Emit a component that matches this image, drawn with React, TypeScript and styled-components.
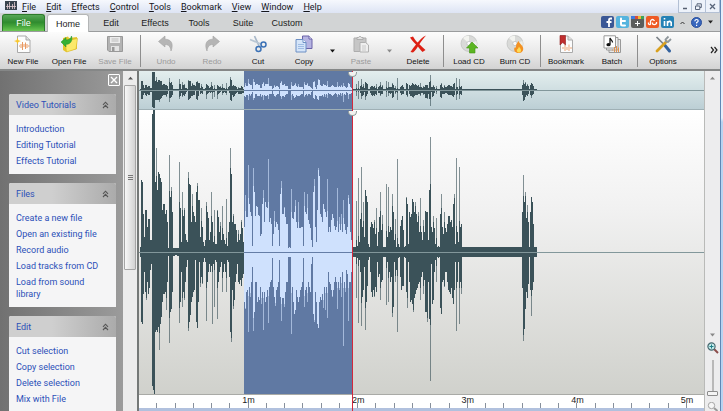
import React from "react";
import styled, { createGlobalStyle, css } from "styled-components";

const Global = createGlobalStyle`
  html, body, #root { height: 100%; margin: 0; }
  body { background: #e9f1fa; overflow: hidden; }
  *, *::before, *::after { box-sizing: border-box; }
  button { border: 0; padding: 0; background: none; color: inherit; font: inherit; }
`;

const uiFont = `Roboto, "Open Sans", sans-serif`;
const compactFont = `"Liberation Sans", Arial, sans-serif`;

const Desktop = styled.div`
  display: flex;
  height: 100%;
  padding-right: 2px;
  background: linear-gradient(#e6eefa 0 118px, #b7d3f1 122px 100%);
`;

const Window = styled.div`
  display: flex;
  flex-direction: column;
  flex: 1;
  min-width: 0;
  border-right: 1px solid #5f87b5;
  background: #f0f0f0;
  color: #1c1c1c;
  font: 9px/12px ${uiFont};
`;

const MenuBar = styled.nav`
  display: flex;
  align-items: center;
  flex: none;
  height: 13px;
  padding-left: 5px;
  background: linear-gradient(#f6f8fd, #dde4f4);
`;

const MenuItem = styled.button`
  margin-left: 10px;
  font: 9px/12px ${uiFont};
  color: #16161c;
  &:first-of-type { margin-left: 5px; }
  &::first-letter { text-decoration: underline; }
`;

const WindowButtons = styled.div`
  display: flex;
  align-self: stretch;
  margin-left: auto;
`;

const WindowButton = styled.button`
  display: grid;
  place-items: center;
  width: 14px;
  border: 1px solid #b3c0d4;
  border-top: 0;
  background: #edf2fa;
  & + & { border-left: 0; }
`;

const TabBar = styled.div`
  display: flex;
  align-items: flex-end;
  flex: none;
  height: 19px;
  padding-left: 2px;
  border-bottom: 1px solid #9a9c9d;
  background: #d2d4d5;
`;

const Tab = styled.button<{ $kind?: "file" | "active" }>`
  width: 44px;
  height: 17px;
  border-radius: 3px 3px 0 0;
  font: 9px/16px ${compactFont};
  ${(p) =>
    p.$kind === "file" &&
    css`
      width: 43px;
      margin-right: 2px;
      border: 1px solid #2c7a2c;
      border-bottom: 0;
      color: #fff;
      background: linear-gradient(#58a758, #2f8b2f 45%, #44a53a 70%, #6cc653);
    `}
  ${(p) =>
    p.$kind === "active" &&
    css`
      width: 42px;
      height: 18px;
      margin-bottom: -1px;
      border: 1px solid #b4b6b7;
      border-bottom: 0;
      background: #fff;
    `}
`;

const SocialLinks = styled.div`
  display: flex;
  align-items: center;
  align-self: stretch;
  gap: 2px;
  margin-left: auto;
  padding-right: 4px;
`;

const SocialLink = styled.a<{ $color: string }>`
  display: grid;
  place-items: center;
  width: 13px;
  height: 12px;
  border-radius: 2px;
  background: ${(p) => p.$color};
  svg { display: block; }
`;

const RibbonButton = styled.button`
  display: grid;
  place-items: center;
  width: 12px;
  height: 12px;
`;

const Toolbar = styled.div`
  display: flex;
  flex: none;
  height: 37px;
  background: linear-gradient(#fcfcfc, #e9e9e9 55%, #d3d3d3);
`;

const Tool = styled.button`
  display: flex;
  flex-direction: column;
  align-items: center;
  flex: none;
  width: 46px;
  padding-top: 3px;
  font: 8px/11px ${compactFont};
  color: #111;
  white-space: nowrap;
  svg { display: block; margin-bottom: 2px; }
  &:disabled { color: #9b9b9b; }
`;

const ToolArrow = styled.button`
  display: grid;
  place-items: center;
  width: 11px;
`;

const ToolDivider = styled.div`
  flex: none;
  width: 1px;
  margin: 3px 2px 2px;
  background: #8e8e8e;
`;

const Overflow = styled.button`
  margin-left: auto;
  padding-right: 2px;
`;

const Body = styled.div`
  display: flex;
  flex: 1;
  min-height: 0;
  border-top: 2px solid #858787;
`;

const Sidebar = styled.aside`
  display: flex;
  flex: none;
  width: 139px;
  border-right: 2px solid #747877;
  background: #8f8f8f;
`;

const PanelList = styled.div`
  display: flex;
  flex-direction: column;
  gap: 9px;
  flex: 1;
  min-width: 0;
  overflow: hidden;
  padding: 3px 7px 0 9px;
  background: linear-gradient(90deg, #717171, #9b9b9b);
`;

const CloseButton = styled.button`
  display: grid;
  place-items: center;
  flex: none;
  align-self: flex-end;
  width: 12px;
  height: 12px;
  margin: 0 -4px -1px 0;
  border: 1px solid #fff;
  border-radius: 1px;
  background: #a3a3a3;
`;

const Panel = styled.section`
  flex: none;
  border-radius: 2px 2px 0 0;
  background: #f5f5f6;
`;

const PanelTitle = styled.h2`
  display: flex;
  align-items: center;
  justify-content: space-between;
  height: 21px;
  margin: 0;
  padding: 0 7px;
  border-radius: 2px 2px 0 0;
  background: linear-gradient(90deg, #cfcfcf 40%, #ababab);
  font: 9px/12px ${uiFont};
  color: #2c50b8;
`;

const PanelLinks = styled.ul`
  display: flex;
  flex-direction: column;
  gap: 4px;
  margin: 0;
  padding: 8px 7px 7px;
  list-style: none;
`;

const PanelLink = styled.a`
  display: block;
  font: 9px/12px ${uiFont};
  color: #2c50b8;
  text-decoration: none;
`;

const SideScroll = styled.div`
  display: flex;
  flex-direction: column;
  align-items: center;
  flex: none;
  width: 14px;
  background: #ececec;
`;

const ScrollArrow = styled.button`
  display: grid;
  place-items: center;
  width: 12px;
  height: 14px;
`;

const ScrollThumb = styled.div`
  display: grid;
  place-items: center;
  width: 12px;
  height: 185px;
  border: 1px solid #a5a5a5;
  border-radius: 1px;
  background: linear-gradient(90deg, #f8f8f8, #d2d2d2);
`;

const WaveColumn = styled.main`
  position: relative;
  display: flex;
  flex-direction: column;
  flex: 1;
  min-width: 0;
`;

const OverviewPane = styled.div`
  flex: none;
  height: 39px;
  border-bottom: 1px solid #9fb0b5;
  background: linear-gradient(#e3eeee, #bccfd5);
  svg { display: block; width: 100%; height: 100%; }
`;

const MainPane = styled.div`
  flex: 1;
  min-height: 0;
  border-bottom: 1px solid #a9aaa6;
  background: linear-gradient(#fff, #f1f1f1 35%, #d0d1cc);
  svg { display: block; width: 100%; height: 100%; }
`;

const Ruler = styled.div`
  flex: none;
  height: 16px;
  overflow: hidden;
  border-bottom: 3px solid #b1c1de;
  background: #fff;
`;

const RulerLabels = styled.div`
  display: flex;
  height: 8px;
  &::before {
    content: "";
    flex: 0 0 9.7%;
  }
  span {
    flex: 0 0 19.4%;
    text-align: center;
    font: 9px/10px ${compactFont};
    color: #222;
  }
`;

const RulerTicks = styled.div`
  display: flex;
  height: 5px;
  i {
    flex: 0 0 3.2333%;
    border-right: 1px solid #87909c;
  }
`;

const Playhead = styled.div`
  position: absolute;
  top: 0;
  bottom: 0;
  left: 37.7%;
  width: 1px;
  background: #d3283c;
`;

const PlayheadGrip = styled.div<{ $top: number }>`
  position: absolute;
  top: ${(p) => p.$top}px;
  left: -4px;
  width: 9px;
  height: 5px;
  border: 1px solid #8e9a9a;
  border-top: 0;
  border-radius: 0 0 5px 5px;
  background: #f2f2f0;
`;

const ZoomRail = styled.div`
  display: flex;
  flex-direction: column;
  align-items: center;
  flex: none;
  width: 16px;
  border-left: 1px solid #b9bab8;
  background: #ededee;
`;

const RailSpacer = styled.div`
  flex: 1;
`;

const ZoomSlider = styled.input`
  appearance: none;
  writing-mode: vertical-lr;
  direction: rtl;
  width: 12px;
  height: 36px;
  margin: 6px 0 6px;
  background: linear-gradient(#b9b9b9, #b9b9b9) center / 2px 100% no-repeat;
  &::-webkit-slider-thumb {
    appearance: none;
    width: 11px;
    height: 5px;
    border: 1px solid #8c8c8c;
    border-radius: 1px;
    background: #f4f4f4;
  }
`;

/* Peak height above and below the centre line, one pair per column, by first column of each run. */
const FLOOR = 5;
type Pair = [number, number];
const runs: { start: number; peaks: Pair[] }[] = [
  {
    start: 1,
    peaks: [
      [5, 5], [72, 70], [70, 72], [38, 42], [15, 20], [42, 40], [42, 48], [25, 30], [33, 42], [33, 36],
      [12, 18], [12, 12], [138, 134], [143, 138], [143, 142], [70, 80], [104, 78], [62, 80], [80, 75], [78, 98],
      [74, 72], [70, 65], [42, 50], [48, 42], [48, 42], [38, 40], [42, 58], [30, 30], [4, 4], [97, 91],
      [55, 60], [65, 57], [40, 40], [4, 4], [4, 4], [4, 3], [4, 3], [4, 4], [4, 4], [90, 71],
      [44, 50], [10, 20], [60, 55], [36, 40], [44, 48], [18, 30], [12, 15], [10, 8], [80, 79], [68, 70],
      [67, 63], [30, 50], [58, 45], [40, 40], [36, 38], [30, 8], [60, 70], [69, 76], [52, 50], [52, 10],
      [15, 35], [44, 25], [25, 32], [10, 10], [6, 6], [12, 10], [50, 69], [40, 30], [34, 20], [12, 12],
      [20, 20], [60, 14], [30, 72], [10, 12], [42, 55], [8, 8], [8, 10], [42, 67], [35, 30], [20, 20],
      [30, 15], [12, 10], [46, 40], [18, 20], [12, 12], [8, 20], [53, 40], [6, 8], [20, 10], [30, 25],
      [104, 80], [78, 90], [30, 38], [38, 57], [28, 48], [28, 30], [22, 22], [10, 12], [22, 30], [12, 32],
      [18, 28], [32, 34], [24, 26], [10, 22],
    ],
  },
  {
    start: 105,
    peaks: [
      [25, 50], [57, 57], [35, 40], [35, 38], [87, 80], [48, 35], [40, 45], [36, 30], [6, 15], [84, 79],
      [60, 60], [36, 30], [46, 30], [45, 50], [37, 45], [36, 48], [16, 35], [18, 52], [48, 40], [62, 78],
      [30, 40], [50, 50], [45, 45], [44, 38], [93, 71], [30, 35], [34, 30], [28, 28], [6, 6], [18, 35],
      [41, 45], [25, 54], [30, 38], [28, 35], [22, 30], [6, 8], [58, 45], [71, 69], [38, 46], [38, 46],
      [45, 55], [35, 40], [28, 30], [28, 30], [4, 5], [5, 5], [4, 5], [63, 82], [34, 35], [33, 50],
      [40, 62], [52, 58], [30, 38], [24, 45], [50, 50], [24, 45], [24, 38], [25, 35], [25, 30], [6, 6],
      [60, 55], [40, 38], [38, 35], [58, 50], [32, 30], [28, 35], [24, 40], [12, 12], [5, 5], [60, 62],
      [73, 70], [25, 40], [10, 50], [42, 72], [84, 76], [76, 50], [38, 45], [35, 48], [30, 42], [48, 56],
      [43, 35], [40, 58], [35, 35], [73, 66], [20, 20], [25, 30], [20, 32], [32, 38], [38, 45], [34, 38],
      [26, 30], [22, 25], [25, 30], [64, 57], [20, 30], [35, 38], [22, 25], [38, 45], [20, 20], [52, 94],
      [28, 30], [22, 40], [18, 18], [25, 22], [57, 69], [48, 30], [20, 30], [12, 20], [12, 15],
    ],
  },
  {
    start: 214,
    peaks: [
      [5, 5], [5, 5], [5, 5], [51, 46], [6, 6], [74, 71], [10, 8], [33, 20], [85, 74], [25, 45],
      [50, 38], [15, 15], [62, 78], [56, 50], [50, 34], [8, 8], [5, 5], [25, 20], [30, 40], [28, 45],
      [24, 38], [32, 45], [18, 35], [44, 40], [6, 10], [20, 25], [35, 22], [60, 48], [22, 30], [37, 28],
      [5, 5], [5, 5], [5, 5], [68, 53], [15, 10], [65, 50], [20, 20], [25, 30], [22, 25], [58, 65],
      [40, 55], [12, 10], [33, 30], [5, 18], [93, 80], [8, 6], [5, 5], [26, 25], [32, 38], [36, 34],
      [22, 34], [5, 5], [6, 6], [55, 40], [48, 56], [8, 10], [40, 30], [35, 50], [38, 48], [53, 52],
      [50, 60], [40, 46], [50, 42], [38, 38], [30, 36], [40, 32], [20, 30], [54, 48], [20, 25], [12, 20],
      [32, 42], [20, 28], [41, 60], [40, 60], [40, 70], [12, 30], [62, 67], [115, 129], [25, 12], [20, 52],
      [36, 48], [24, 20], [8, 8], [34, 30], [5, 5], [6, 6], [5, 5], [38, 56], [58, 62], [25, 30],
      [18, 28], [40, 35], [24, 20], [20, 20], [28, 30], [36, 38], [36, 40], [30, 42], [32, 36], [25, 46],
      [48, 52], [58, 38], [8, 10], [94, 79], [20, 30], [10, 10], [85, 72], [25, 30], [28, 42],
    ],
  },
  {
    start: 383,
    peaks: [
      [40, 36], [77, 89], [50, 77], [60, 57], [34, 40], [47, 46], [30, 32], [5, 5], [40, 38], [55, 64],
      [50, 38], [28, 30], [5, 5], [5, 5], [5, 5],
    ],
  },
];

const END = 398;
const peaks: Pair[] = Array.from({ length: END }, () => [FLOOR, FLOOR] as Pair);
runs.forEach((run) => run.peaks.forEach((p, i) => (peaks[run.start + i] = p)));

const SEL_START = 105;
const SEL_END = 213;
const VIEW_WIDTH = 565;

const columns = (from: number, to: number, mid: number, scale: number, core: boolean) => {
  let d = "";
  for (let x = Math.max(from, 1); x < to; x++) {
    const reach = (side: 0 | 1) => {
      const own = peaks[x][side];
      const before = peaks[x - 1]?.[side] ?? FLOOR;
      const after = peaks[x + 1]?.[side] ?? FLOOR;
      const size = core ? Math.min(own, Math.max(before, after) + 6) : own;
      return Math.max(1, Math.round(size * scale));
    };
    d += `M${x + 0.5} ${mid - reach(0)}V${mid + reach(1)}`;
  }
  return d;
};

function Waveform({ height, mid, scale }: { height: number; mid: number; scale: number }) {
  const parts = [
    { from: 0, to: SEL_START, color: "#3b5259" },
    { from: SEL_START, to: SEL_END, color: "#cfe1fd" },
    { from: SEL_END, to: END, color: "#3b5259" },
  ];
  return (
    <svg viewBox={`0 0 ${VIEW_WIDTH} ${height}`} preserveAspectRatio="none" role="img" aria-label="Waveform">
      <rect x={SEL_START} width={SEL_END - SEL_START + 1} height={height} fill="#6079a3" />
      {parts.map((p) => (
        <g key={p.from} stroke={p.color}>
          <path d={columns(p.from, p.to, mid, scale, false)} opacity={0.62} />
          <path d={columns(p.from, p.to, mid, scale, true)} />
        </g>
      ))}
      <path d={`M0 ${mid + 0.5}H${VIEW_WIDTH}`} stroke="#82979b" />
      <path d={`M${SEL_START} ${mid + 0.5}H${SEL_END}`} stroke="#647da6" />
    </svg>
  );
}

const Caret = ({ up, color = "#222" }: { up?: boolean; color?: string }) => (
  <svg width="7" height="4" viewBox="0 0 7 4">
    <path d={up ? "M1 3.5L3.5 .8L6 3.5Z" : "M1 .5H6L3.5 3.4Z"} fill={color} />
  </svg>
);

const Chevrons = () => (
  <svg width="7" height="8" viewBox="0 0 7 8" fill="none" stroke="#555" strokeWidth="1.1">
    <path d="M1 3.8L3.5 1.2L6 3.8M1 7L3.5 4.4L6 7" />
  </svg>
);

const Disc = () => (
  <>
    <circle cx="9" cy="8.5" r="8" fill="#d9dad8" stroke="#bdbfbd" strokeWidth=".7" />
    <path d="M9 8.5L3 3A8 8 0 0 1 9 .8Z" fill="#f3f4f0" />
    <path d="M9 8.5L16.5 6A8 8 0 0 1 16 12Z" fill="#eef0ea" />
    <circle cx="9" cy="8.5" r="2.2" fill="#fafafa" stroke="#b8baba" strokeWidth=".7" />
  </>
);

const icons: Record<string, React.ReactNode> = {
  new: (
    <>
      <path d="M3.5 1H12L16 5V17.5H3.5Z" fill="#fdfdfd" stroke="#a9a9a9" />
      <path d="M12 1V5H16" fill="#e2e2e2" stroke="#a9a9a9" />
      <path d="M5 11H6M7 9V13M8.5 7V15M10 9V12M11.500 7.500V14M13 9V13M14 11H15.500" stroke="#e99a63" />
      <path d="M3.500 2.500L4.400 5.200L7 6L4.400 6.900L3.500 9.500L2.600 6.900L0 6L2.600 5.200Z" fill="#f8c62a" />
    </>
  ),
  open: (
    <>
      <path d="M3 3L8 1.500L9 3L17 2V14L6 17L3 15Z" fill="#e5c62b" />
      <path d="M5 6L17.500 3.500L16 14L6.500 17Z" fill="#fbe96a" stroke="#d8b526" strokeWidth=".6" />
      <path d="M1 7L6 2.500V5C9 5 11 3.500 11.500 1C13 6 10 9.500 6 9.300V12Z" fill="#35b135" stroke="#1d8f2a" strokeWidth=".5" />
    </>
  ),
  save: (
    <>
      <path d="M1.500 1.500H16.500V16.500H3L1.500 15Z" fill="#b3b3b3" stroke="#999" />
      <path d="M4 2H14V8H4Z" fill="#ececec" />
      <path d="M5.500 4H12.500M5.500 6H12.500" stroke="#bbb" />
      <path d="M5 11H13V16H5Z" fill="#e4e4e4" />
      <path d="M6 12H8.500V16H6Z" fill="#999" />
    </>
  ),
  undo: <path d="M1.500 6.500L8 1V4.200C14 4.200 17 8.500 14 16C13.500 11.500 11.500 9.500 8 9.500V12Z" fill="#b5b5b5" stroke="#a2a2a2" strokeWidth=".6" />,
  redo: <path d="M16.500 6.500L10 1V4.200C4 4.200 1 8.500 4 16C4.500 11.500 6.500 9.500 10 9.500V12Z" fill="#b5b5b5" stroke="#a2a2a2" strokeWidth=".6" />,
  cut: (
    <>
      <path d="M5.500 1L10.500 12" stroke="#a7b7c8" strokeWidth="1.700" />
      <path d="M1 4.500L13 9.500" stroke="#b9c7d4" strokeWidth="1.700" />
      <circle cx="9.500" cy="14" r="2.500" fill="none" stroke="#3c72b6" strokeWidth="1.500" />
      <circle cx="14.500" cy="9.500" r="2.500" fill="none" stroke="#3c72b6" strokeWidth="1.500" />
    </>
  ),
  copy: (
    <>
      <path d="M7.500 1H14L17 4V13.500H7.500Z" fill="#b6b4e2" stroke="#6a62a8" />
      <path d="M14 1V4H17" fill="#efeefa" stroke="#6a62a8" />
      <path d="M1 4.500H8L11 7.500V17H1Z" fill="#d5e5f9" stroke="#6d8fc4" />
      <path d="M3 9.500H9M3 11.500H9M3 13.500H9" stroke="#9fbce4" />
      <path d="M8 4.500V7.500H11" fill="#fff" stroke="#6d8fc4" />
    </>
  ),
  paste: (
    <>
      <path d="M2 3H14V16.500H2Z" fill="#c6c6c6" stroke="#adadad" />
      <path d="M5 4.500V2.500H6.500A1.600 1.600 0 0 1 9.500 2.500H11V4.500Z" fill="#e2e2e2" stroke="#a5a5a5" strokeWidth=".8" />
      <path d="M8 7.500H13.500L16.500 10V17H8Z" fill="#efefef" stroke="#b0b0b0" />
      <path d="M10 11H14M10 13H14M10 15H14" stroke="#cacaca" />
    </>
  ),
  remove: <path d="M1 2.500L4 1.500C6 5 7.500 6.500 8.700 7.600C11 4.500 13.500 2 17 .5C14 4 12 6.500 10.400 9.300C12.500 11.500 14.500 13.500 16.500 15L13.500 17C11.500 15 10 13.200 8.900 11.600C7.500 14 6 16 4 17.500L1.500 17C3 14.500 5 12 7 9.500C4.500 7 2.500 5 1 2.500Z" fill="#dd2014" />,
  load: (
    <>
      <Disc />
      <path d="M12 7L18 13H15V18H9.500V13H6.500Z" fill="#5cb622" stroke="#3f9414" strokeWidth=".6" />
    </>
  ),
  burn: (
    <>
      <Disc />
      <path d="M12.500 6C13.500 9 16 9.500 17 12.500C18 16 15.500 18 12.500 18C9 18 7.500 15.500 8.500 12.500C9.500 13 10 12.500 10 11.500C10 9.500 11 8 12.500 6Z" fill="#f39223" />
      <path d="M13 11.500C13.500 13 15 13.500 15 15.500C15 17 14 17.500 12.700 17.500C11 17.500 10.500 16 11 14.500C12 14 12.500 13 13 11.500Z" fill="#fddc56" />
    </>
  ),
  bookmark: (
    <>
      <path d="M3.500 1H11L15.500 5V17.500H3.500Z" fill="#fcfcfc" stroke="#aaa" />
      <path d="M11 1V5H15.500" fill="#e1e1e1" stroke="#aaa" />
      <path d="M6 12V14M8 10V16M10 12V15M12 9.500V16M14 12V14" stroke="#eda778" />
      <path d="M3 .5H8.500V10L5.750 7.500L3 10Z" fill="#c02e2e" stroke="#8f1c1c" strokeWidth=".6" />
    </>
  ),
  batch: (
    <>
      <path d="M6 4.500H17.500V17.500H6Z" fill="#e9e9e9" stroke="#999" />
      <path d="M3.500 2.500H15V15H3.500Z" fill="#f1f1f1" stroke="#999" />
      <path d="M1 .8H12.500V13H1Z" fill="#fff" stroke="#999" />
      <path d="M9 15H10M11.500 12V17M13.500 11V17M15.500 12.500V17" stroke="#e4924e" />
      <path d="M7 9.500V3C7.500 5 9.500 5 9.500 7.500" fill="none" stroke="#111" strokeWidth="1.300" />
      <ellipse cx="5.500" cy="9.700" rx="2.100" ry="1.600" fill="#111" />
    </>
  ),
  options: (
    <>
      <path d="M2.500 2L11.500 11" stroke="#7a8188" strokeWidth="1.700" />
      <path d="M11 10.500L15.500 16" stroke="#33629e" strokeWidth="3" strokeLinecap="round" />
      <path d="M12.500 6.500L3 16" stroke="#d9a11f" strokeWidth="2.800" strokeLinecap="round" />
      <path d="M14.500 1.500L11.500 4.500L12 6.500L14 7L17 4" fill="none" stroke="#8f979c" strokeWidth="1.800" />
    </>
  ),
};

const Icon = ({ name }: { name: string }) => (
  <svg width="18" height="19" viewBox="0 0 18 19" fill="none" aria-hidden="true">
    {icons[name]}
  </svg>
);

type ToolItem = { icon: string; label: string; disabled?: boolean; menu?: boolean };
const toolGroups: ToolItem[][] = [
  [
    { icon: "new", label: "New File" },
    { icon: "open", label: "Open File" },
    { icon: "save", label: "Save File", disabled: true },
  ],
  [
    { icon: "undo", label: "Undo", disabled: true },
    { icon: "redo", label: "Redo", disabled: true },
    { icon: "cut", label: "Cut" },
    { icon: "copy", label: "Copy", menu: true },
    { icon: "paste", label: "Paste", disabled: true, menu: true },
    { icon: "remove", label: "Delete" },
  ],
  [
    { icon: "load", label: "Load CD" },
    { icon: "burn", label: "Burn CD" },
  ],
  [
    { icon: "bookmark", label: "Bookmark" },
    { icon: "batch", label: "Batch" },
  ],
  [{ icon: "options", label: "Options" }],
];

const panels = [
  { title: "Video Tutorials", links: ["Introduction", "Editing Tutorial", "Effects Tutorial"] },
  {
    title: "Files",
    links: ["Create a new file", "Open an existing file", "Record audio", "Load tracks from CD", "Load from sound library"],
  },
  { title: "Edit", links: ["Cut selection", "Copy selection", "Delete selection", "Mix with File"] },
];

const menus = ["File", "Edit", "Effects", "Control", "Tools", "Bookmark", "View", "Window", "Help"];
const tabs = ["Edit", "Effects", "Tools", "Suite", "Custom"];

const social = [
  { name: "Facebook", color: "#3a5795", art: <path d="M11 2.500H9.500Q8 2.500 8 4.200V11M5.500 6H10.500" stroke="#fff" strokeWidth="1.800" /> },
  { name: "Twitter", color: "#55b4de", art: <path d="M5 2.500V8Q5 9.500 6.500 9.500H9M5 5H9" stroke="#fff" strokeWidth="2" strokeLinecap="round" /> },
  {
    name: "Google Plus",
    color: "#5b5d5c",
    art: (
      <>
        <path d="M0 1.500H4" stroke="#3d7be0" strokeWidth="3" />
        <path d="M4 1.500H7" stroke="#dc4b3a" strokeWidth="3" />
        <path d="M7 1.500H10" stroke="#efba32" strokeWidth="3" />
        <path d="M10 1.500H13" stroke="#3da457" strokeWidth="3" />
        <path d="M4 7.500H9M6.500 5V10" stroke="#fff" />
      </>
    ),
  },
  { name: "StumbleUpon", color: "#ee5a24", art: <path d="M2.500 6.500V8Q4.500 9.500 4.500 7.500V5Q6.500 2 8.500 5M6.500 6.500V8Q8.500 9.500 10.500 7.500V6" stroke="#fff" strokeWidth="1.300" /> },
  { name: "LinkedIn", color: "#2481b5", art: <path d="M3.500 5V10M3.500 2V3.600M6.500 10V5M6.500 7Q8.500 4 10.200 6.500V10" stroke="#fff" strokeWidth="1.600" /> },
];

export default function App() {
  return (
    <Desktop>
      <Global />
      <Window>
        <MenuBar aria-label="Main menu">
          <svg width="12" height="12" viewBox="0 0 12 12" aria-hidden="true">
            <path d="M0 0H12V9H0Z" fill="#39444f" />
            <path d="M1 5.500H11M2.500 3V8M4.500 1V8M7.500 3V8M9.500 1V8" stroke="#e5cdd3" strokeWidth=".8" />
          </svg>
          {menus.map((m) => (
            <MenuItem key={m}>{m}</MenuItem>
          ))}
          <WindowButtons>
            <WindowButton aria-label="Minimize">
              <svg width="7" height="7"><path d="M1 5.500H5" stroke="#555f70" strokeWidth="1.500" /></svg>
            </WindowButton>
            <WindowButton aria-label="Restore">
              <svg width="7" height="7" fill="none" stroke="#59657a"><path d="M2 2.500V.8H6.300V4.500H5M.5 3H4.800V6.500H.5Z" /></svg>
            </WindowButton>
            <WindowButton aria-label="Close">
              <svg width="7" height="7" stroke="#59657a" strokeWidth="1.300"><path d="M1 1L6 6M6 1L1 6" /></svg>
            </WindowButton>
          </WindowButtons>
        </MenuBar>

        <TabBar>
          <Tab $kind="file">File</Tab>
          <Tab $kind="active">Home</Tab>
          {tabs.map((t) => (
            <Tab key={t}>{t}</Tab>
          ))}
          <SocialLinks>
            {social.map((s) => (
              <SocialLink key={s.name} href="#" aria-label={s.name} $color={s.color}>
                <svg width="13" height="12" viewBox="0 0 13 12" fill="none">{s.art}</svg>
              </SocialLink>
            ))}
            <RibbonButton aria-label="Collapse ribbon">
              <svg width="7" height="5" fill="none" stroke="#333"><path d="M1.500 4L3.500 2L5.500 4" /></svg>
            </RibbonButton>
            <RibbonButton aria-label="Help">
              <svg width="11" height="11" viewBox="0 0 11 11" fill="none">
                <circle cx="5.500" cy="5.500" r="5" fill="#3867be" stroke="#2a4f9b" />
                <path d="M3.800 4.200Q4 2.500 5.600 2.500T7.200 4Q7.200 4.800 5.600 5.600V6.600M5.600 7.700V9" stroke="#fff" strokeWidth="1.200" />
              </svg>
            </RibbonButton>
            <RibbonButton aria-label="More help">
              <Caret />
            </RibbonButton>
          </SocialLinks>
        </TabBar>

        <Toolbar>
          {toolGroups.map((group, i) => (
            <React.Fragment key={i}>
              {i > 0 && <ToolDivider />}
              {group.map((t) => (
                <React.Fragment key={t.label}>
                  <Tool disabled={t.disabled}>
                    <Icon name={t.icon} />
                    {t.label}
                  </Tool>
                  {t.menu && (
                    <ToolArrow aria-label={`${t.label} options`} disabled={t.disabled}>
                      <Caret color={t.disabled ? "#8a8a8a" : "#111"} />
                    </ToolArrow>
                  )}
                </React.Fragment>
              ))}
            </React.Fragment>
          ))}
          <Overflow aria-label="More tools">
            <svg width="8" height="8" fill="none" stroke="#222" strokeWidth="1.200"><path d="M1 1L3.500 4L1 7M4.500 1L7 4L4.500 7" /></svg>
          </Overflow>
        </Toolbar>

        <Body>
          <Sidebar>
            <PanelList>
              <CloseButton aria-label="Close panel">
                <svg width="8" height="8" stroke="#fff" strokeWidth="1.400"><path d="M1 1L7 7M7 1L1 7" /></svg>
              </CloseButton>
              {panels.map((p) => (
                <Panel key={p.title}>
                  <PanelTitle>
                    {p.title}
                    <Chevrons />
                  </PanelTitle>
                  <PanelLinks>
                    {p.links.map((l) => (
                      <li key={l}>
                        <PanelLink href="#">{l}</PanelLink>
                      </li>
                    ))}
                  </PanelLinks>
                </Panel>
              ))}
            </PanelList>
            <SideScroll>
              <ScrollArrow aria-label="Scroll up"><Caret up color="#555" /></ScrollArrow>
              <ScrollThumb>
                <svg width="5" height="7" stroke="#777"><path d="M0 1.500H5M0 3.500H5M0 5.500H5" /></svg>
              </ScrollThumb>
            </SideScroll>
          </Sidebar>

          <WaveColumn>
            <OverviewPane>
              <Waveform height={38} mid={19} scale={0.127} />
            </OverviewPane>
            <MainPane>
              <Waveform height={284} mid={142} scale={1} />
            </MainPane>
            <Ruler>
              <RulerLabels>
                {["1m", "2m", "3m", "4m", "5m"].map((l) => (
                  <span key={l}>{l}</span>
                ))}
              </RulerLabels>
              <RulerTicks>
                {Array.from({ length: 30 }, (_, i) => (
                  <i key={i} />
                ))}
              </RulerTicks>
            </Ruler>
            <Playhead>
              <PlayheadGrip $top={1} />
              <PlayheadGrip $top={40} />
            </Playhead>
          </WaveColumn>

          <ZoomRail>
            <ScrollArrow aria-label="Scroll up"><Caret up color="#888" /></ScrollArrow>
            <RailSpacer />
            <ScrollArrow aria-label="Scroll down"><Caret color="#888" /></ScrollArrow>
            <svg width="12" height="12" viewBox="0 0 12 12" fill="none" role="img" aria-label="Zoom in">
              <path d="M7 7L11 11" stroke="#8b4d4a" strokeWidth="2" />
              <circle cx="4.500" cy="4.500" r="3.600" fill="#c4ecec" stroke="#47696f" strokeWidth="1.200" />
              <path d="M2.500 4.500H6.500M4.500 2.500V6.500" stroke="#1d7f86" />
            </svg>
            <ZoomSlider type="range" aria-label="Zoom" min={0} max={100} defaultValue={0} />
            <svg width="12" height="9" viewBox="0 0 12 9" fill="none" role="img" aria-label="Zoom out">
              <path d="M7 6L10.500 9" stroke="#9a9a9a" strokeWidth="2" />
              <circle cx="4.500" cy="3.500" r="3.200" fill="#f6f6f6" stroke="#a5a5a5" />
            </svg>
          </ZoomRail>
        </Body>
      </Window>
    </Desktop>
  );
}
